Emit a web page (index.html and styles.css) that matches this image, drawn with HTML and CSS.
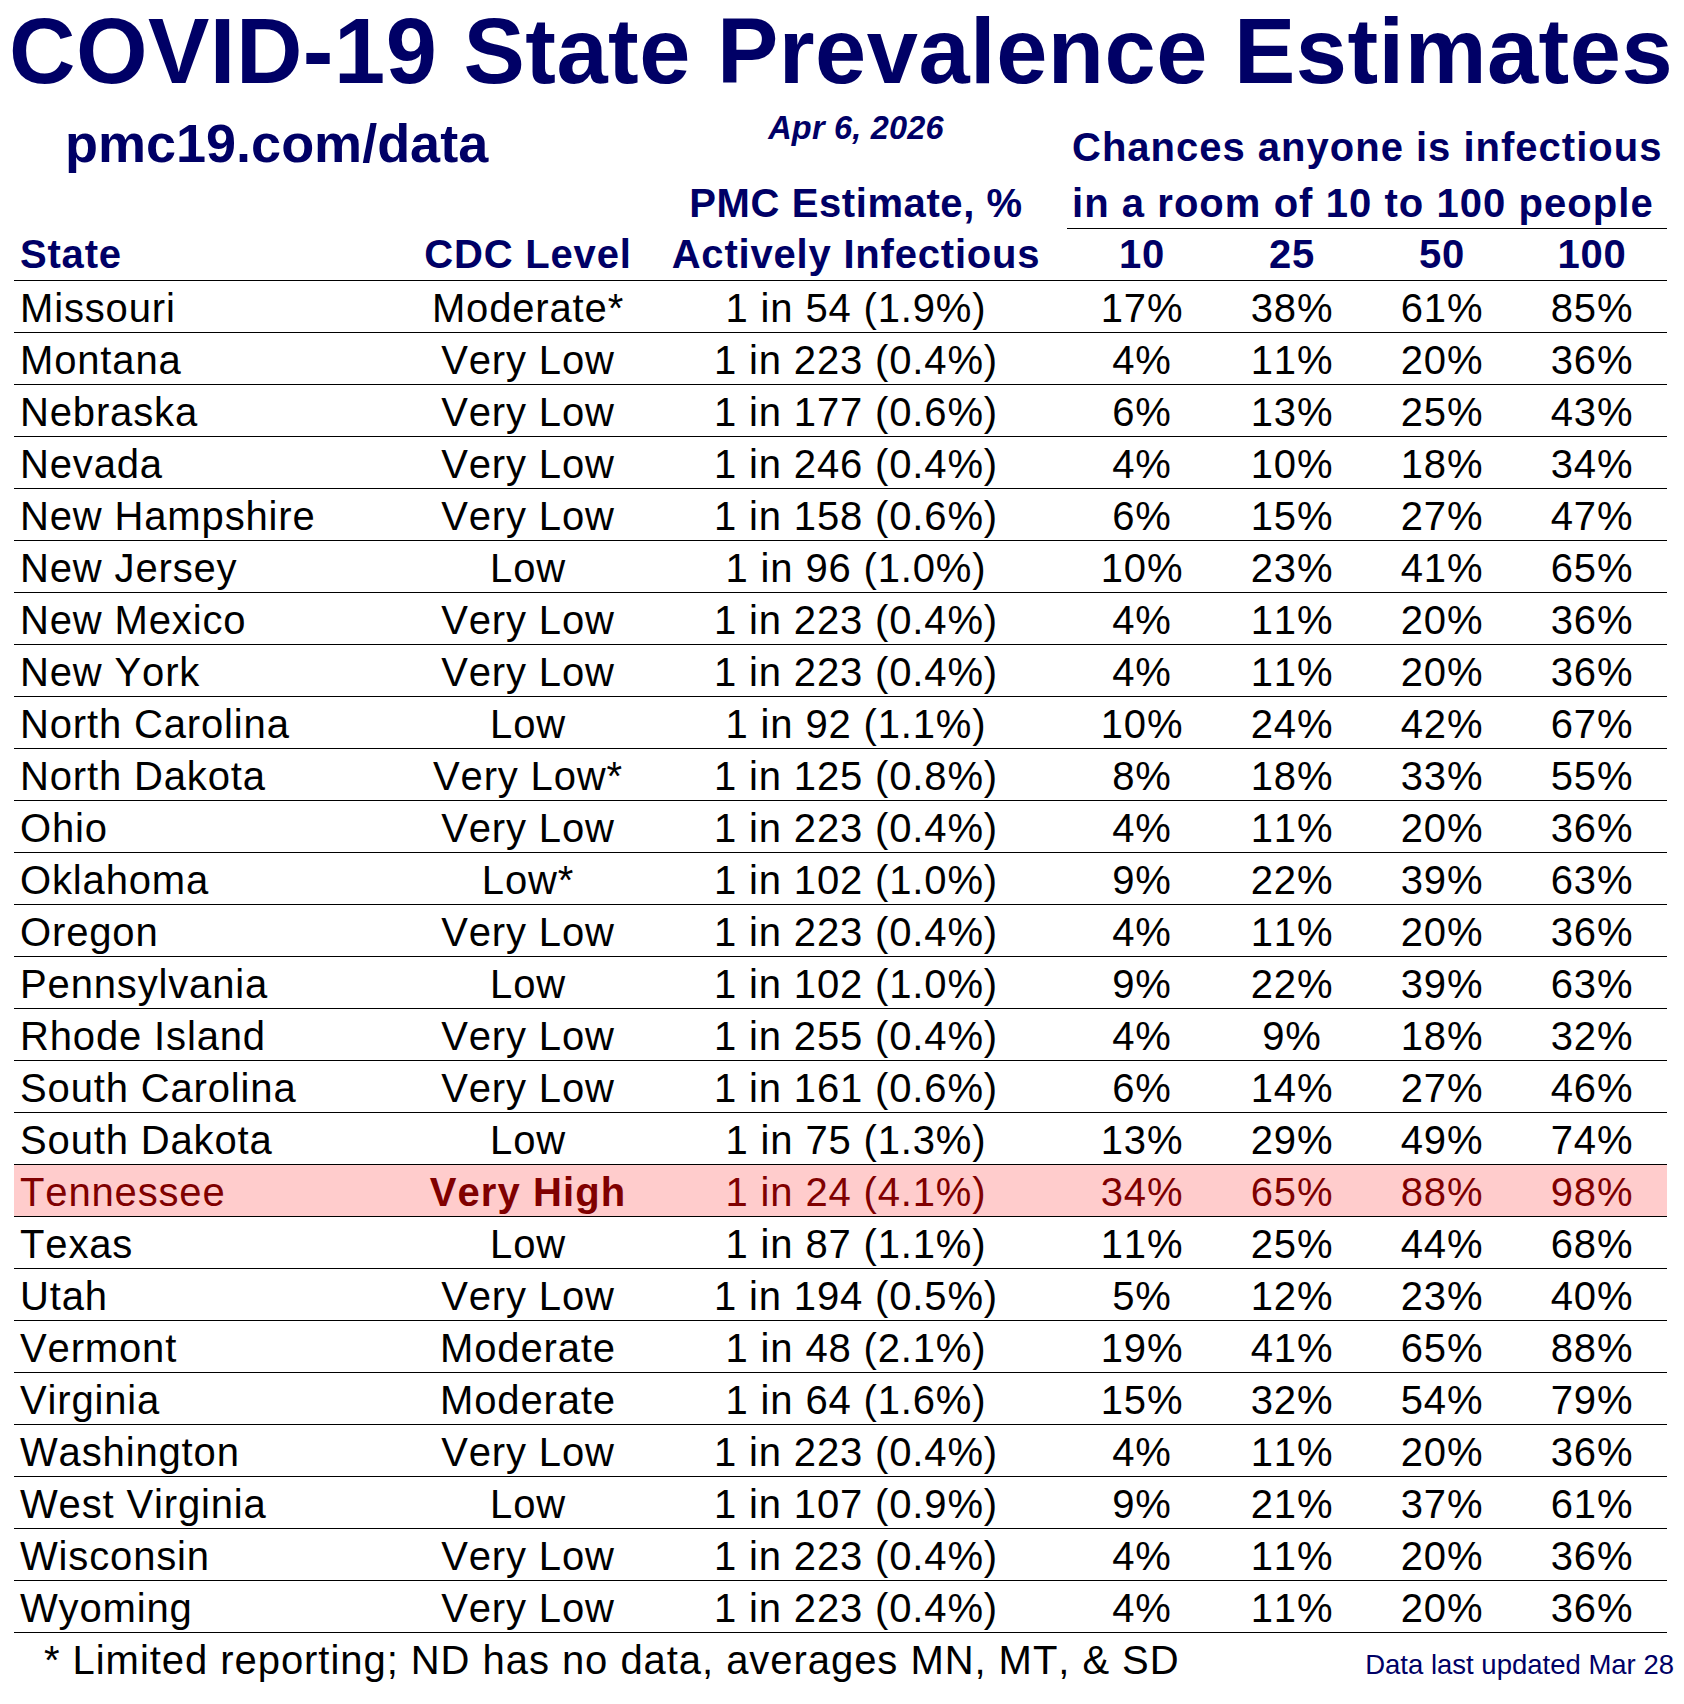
FILE: index.html
```html
<!DOCTYPE html>
<html lang="en">
<head>
<meta charset="utf-8">
<title>COVID-19 State Prevalence Estimates</title>
<link rel="stylesheet" href="styles.css">
</head>
<body>
<div class="page">
  <h1 class="title">COVID-19 State Prevalence Estimates</h1>
  <div class="head">
    <div class="site">pmc19.com/data</div>
    <div class="date">Apr 6, 2026</div>
    <div class="chances">Chances anyone is infectious</div>
    <div class="pmc">PMC Estimate, %</div>
    <div class="room">in a room of 10 to 100 people</div>
  </div>
  <div class="table">
    <div class="row hdr"><div class="st">State</div><div class="ctr">CDC Level</div><div class="ctr">Actively Infectious</div><div class="ctr">10</div><div class="ctr">25</div><div class="ctr">50</div><div class="ctr">100</div></div>
    <div class="row"><div class="st">Missouri</div><div class="ctr">Moderate*</div><div class="ctr">1 in 54 (1.9%)</div><div class="ctr">17%</div><div class="ctr">38%</div><div class="ctr">61%</div><div class="ctr">85%</div></div>
    <div class="row"><div class="st">Montana</div><div class="ctr">Very Low</div><div class="ctr">1 in 223 (0.4%)</div><div class="ctr">4%</div><div class="ctr">11%</div><div class="ctr">20%</div><div class="ctr">36%</div></div>
    <div class="row"><div class="st">Nebraska</div><div class="ctr">Very Low</div><div class="ctr">1 in 177 (0.6%)</div><div class="ctr">6%</div><div class="ctr">13%</div><div class="ctr">25%</div><div class="ctr">43%</div></div>
    <div class="row"><div class="st">Nevada</div><div class="ctr">Very Low</div><div class="ctr">1 in 246 (0.4%)</div><div class="ctr">4%</div><div class="ctr">10%</div><div class="ctr">18%</div><div class="ctr">34%</div></div>
    <div class="row"><div class="st">New Hampshire</div><div class="ctr">Very Low</div><div class="ctr">1 in 158 (0.6%)</div><div class="ctr">6%</div><div class="ctr">15%</div><div class="ctr">27%</div><div class="ctr">47%</div></div>
    <div class="row"><div class="st">New Jersey</div><div class="ctr">Low</div><div class="ctr">1 in 96 (1.0%)</div><div class="ctr">10%</div><div class="ctr">23%</div><div class="ctr">41%</div><div class="ctr">65%</div></div>
    <div class="row"><div class="st">New Mexico</div><div class="ctr">Very Low</div><div class="ctr">1 in 223 (0.4%)</div><div class="ctr">4%</div><div class="ctr">11%</div><div class="ctr">20%</div><div class="ctr">36%</div></div>
    <div class="row"><div class="st">New York</div><div class="ctr">Very Low</div><div class="ctr">1 in 223 (0.4%)</div><div class="ctr">4%</div><div class="ctr">11%</div><div class="ctr">20%</div><div class="ctr">36%</div></div>
    <div class="row"><div class="st">North Carolina</div><div class="ctr">Low</div><div class="ctr">1 in 92 (1.1%)</div><div class="ctr">10%</div><div class="ctr">24%</div><div class="ctr">42%</div><div class="ctr">67%</div></div>
    <div class="row"><div class="st">North Dakota</div><div class="ctr">Very Low*</div><div class="ctr">1 in 125 (0.8%)</div><div class="ctr">8%</div><div class="ctr">18%</div><div class="ctr">33%</div><div class="ctr">55%</div></div>
    <div class="row"><div class="st">Ohio</div><div class="ctr">Very Low</div><div class="ctr">1 in 223 (0.4%)</div><div class="ctr">4%</div><div class="ctr">11%</div><div class="ctr">20%</div><div class="ctr">36%</div></div>
    <div class="row"><div class="st">Oklahoma</div><div class="ctr">Low*</div><div class="ctr">1 in 102 (1.0%)</div><div class="ctr">9%</div><div class="ctr">22%</div><div class="ctr">39%</div><div class="ctr">63%</div></div>
    <div class="row"><div class="st">Oregon</div><div class="ctr">Very Low</div><div class="ctr">1 in 223 (0.4%)</div><div class="ctr">4%</div><div class="ctr">11%</div><div class="ctr">20%</div><div class="ctr">36%</div></div>
    <div class="row"><div class="st">Pennsylvania</div><div class="ctr">Low</div><div class="ctr">1 in 102 (1.0%)</div><div class="ctr">9%</div><div class="ctr">22%</div><div class="ctr">39%</div><div class="ctr">63%</div></div>
    <div class="row"><div class="st">Rhode Island</div><div class="ctr">Very Low</div><div class="ctr">1 in 255 (0.4%)</div><div class="ctr">4%</div><div class="ctr">9%</div><div class="ctr">18%</div><div class="ctr">32%</div></div>
    <div class="row"><div class="st">South Carolina</div><div class="ctr">Very Low</div><div class="ctr">1 in 161 (0.6%)</div><div class="ctr">6%</div><div class="ctr">14%</div><div class="ctr">27%</div><div class="ctr">46%</div></div>
    <div class="row"><div class="st">South Dakota</div><div class="ctr">Low</div><div class="ctr">1 in 75 (1.3%)</div><div class="ctr">13%</div><div class="ctr">29%</div><div class="ctr">49%</div><div class="ctr">74%</div></div>
    <div class="row hot"><div class="st">Tennessee</div><div class="ctr strong">Very High</div><div class="ctr">1 in 24 (4.1%)</div><div class="ctr">34%</div><div class="ctr">65%</div><div class="ctr">88%</div><div class="ctr">98%</div></div>
    <div class="row"><div class="st">Texas</div><div class="ctr">Low</div><div class="ctr">1 in 87 (1.1%)</div><div class="ctr">11%</div><div class="ctr">25%</div><div class="ctr">44%</div><div class="ctr">68%</div></div>
    <div class="row"><div class="st">Utah</div><div class="ctr">Very Low</div><div class="ctr">1 in 194 (0.5%)</div><div class="ctr">5%</div><div class="ctr">12%</div><div class="ctr">23%</div><div class="ctr">40%</div></div>
    <div class="row"><div class="st">Vermont</div><div class="ctr">Moderate</div><div class="ctr">1 in 48 (2.1%)</div><div class="ctr">19%</div><div class="ctr">41%</div><div class="ctr">65%</div><div class="ctr">88%</div></div>
    <div class="row"><div class="st">Virginia</div><div class="ctr">Moderate</div><div class="ctr">1 in 64 (1.6%)</div><div class="ctr">15%</div><div class="ctr">32%</div><div class="ctr">54%</div><div class="ctr">79%</div></div>
    <div class="row"><div class="st">Washington</div><div class="ctr">Very Low</div><div class="ctr">1 in 223 (0.4%)</div><div class="ctr">4%</div><div class="ctr">11%</div><div class="ctr">20%</div><div class="ctr">36%</div></div>
    <div class="row"><div class="st">West Virginia</div><div class="ctr">Low</div><div class="ctr">1 in 107 (0.9%)</div><div class="ctr">9%</div><div class="ctr">21%</div><div class="ctr">37%</div><div class="ctr">61%</div></div>
    <div class="row"><div class="st">Wisconsin</div><div class="ctr">Very Low</div><div class="ctr">1 in 223 (0.4%)</div><div class="ctr">4%</div><div class="ctr">11%</div><div class="ctr">20%</div><div class="ctr">36%</div></div>
    <div class="row"><div class="st">Wyoming</div><div class="ctr">Very Low</div><div class="ctr">1 in 223 (0.4%)</div><div class="ctr">4%</div><div class="ctr">11%</div><div class="ctr">20%</div><div class="ctr">36%</div></div>
  </div>
  <div class="foot">
    <div class="note">* Limited reporting; ND has no data, averages MN, MT, &amp; SD</div>
    <div class="updated">Data last updated Mar 28</div>
  </div>
</div>
</body>
</html>
```

FILE: styles.css
```css
html, body {
  margin: 0;
  padding: 0;
  background: #ffffff;
}

body {
  font-family: "Liberation Sans", Arial, sans-serif;
  font-kerning: none;
  color: #000000;
}

.page {
  width: 1684px;
  height: 1704px;
  overflow: hidden;
}

.title {
  margin: 0;
  padding-left: 9px;
  font-size: 92px;
  line-height: 103px;
  font-weight: 700;
  letter-spacing: 0.5px;
  color: #000066;
  white-space: nowrap;
}

.head {
  display: grid;
  grid-template-columns: 397px 234px 422px 600px;
  grid-template-rows: 77px 49px;
  margin-left: 14px;
  color: #000066;
  font-weight: 700;
}

.site {
  grid-column: 1 / 3;
  grid-row: 1;
  padding: 13px 0 0 51px;
  font-size: 54px;
  line-height: 54px;
}

.date {
  grid-column: 3;
  grid-row: 1;
  padding-top: 9px;
  font-size: 32.5px;
  line-height: 32.5px;
  letter-spacing: 0.2px;
  font-style: italic;
  text-align: center;
}

.chances {
  grid-column: 4;
  grid-row: 1;
  padding: 24px 0 0 5px;
  font-size: 40px;
  line-height: 40px;
  letter-spacing: 1px;
  white-space: nowrap;
}

.pmc {
  grid-column: 3;
  grid-row: 2;
  padding-top: 3px;
  font-size: 40px;
  line-height: 40px;
  letter-spacing: 0.6px;
  text-align: center;
}

.room {
  grid-column: 4;
  grid-row: 2;
  align-self: start;
  height: 45px;
  padding: 3px 0 0 5px;
  font-size: 40px;
  line-height: 40px;
  letter-spacing: 1.05px;
  white-space: nowrap;
  border-bottom: 1px solid #000000;
}

.table {
  margin-left: 14px;
  width: 1653px;
}

.row {
  display: grid;
  grid-template-columns: 397px 234px 422px 150px 150px 150px 150px;
  height: 51px;
  border-bottom: 1px solid #000000;
  font-size: 40px;
  letter-spacing: 0.85px;
  white-space: nowrap;
}

.row > div {
  padding-top: 4px;
  line-height: 47px;
}

.row.hdr {
  color: #000066;
  font-weight: 700;
  letter-spacing: 0.8px;
}

.row.hdr > div {
  padding-top: 0;
  line-height: 51px;
}

.st {
  padding-left: 6px;
}

.ctr {
  text-align: center;
}

.row.hot {
  background: #ffcccc;
  color: #800000;
}

.strong {
  font-weight: 700;
  letter-spacing: 1.1px;
}

.foot {
  display: flex;
  align-items: baseline;
  justify-content: space-between;
  width: 1630px;
  padding: 7px 0 0 44px;
}

.note {
  font-size: 40px;
  line-height: 40px;
  letter-spacing: 0.95px;
  white-space: nowrap;
}

.updated {
  font-size: 27.5px;
  line-height: 27.5px;
  color: #000066;
  white-space: nowrap;
}
```
